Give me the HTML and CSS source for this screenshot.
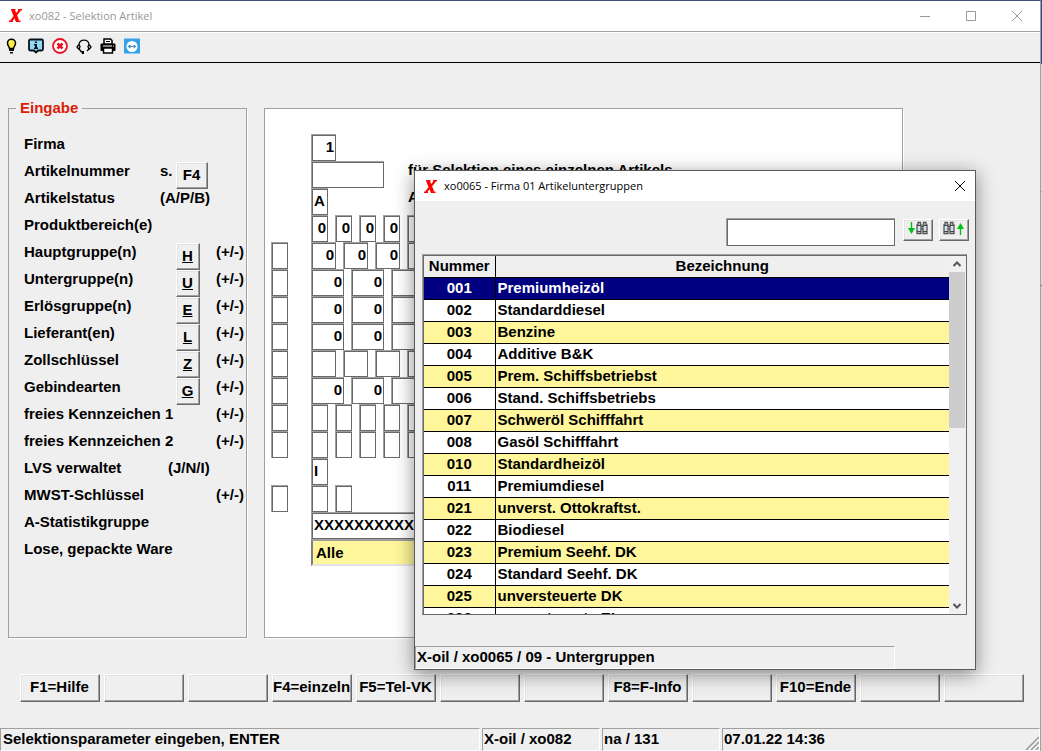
FILE: index.html
```html
<!DOCTYPE html>
<html lang="de">
<head>
<meta charset="utf-8">
<title>xo082 - Selektion Artikel</title>
<link rel="stylesheet" href="styles.css">
</head>
<body>
<div class="window">
  <header class="titlebar">
    <svg class="logo" viewBox="0 0 15 15" aria-hidden="true"><path d="M5 2 9.500 13" stroke="#f00" stroke-width="3.500"/><path d="M12 2 3 13" stroke="#f00" stroke-width="2"/><path d="M3 1.800H7.500M10 1.800H14M1 13.200H5M8 13.200H12.500" stroke="#f00" stroke-width="1.600"/></svg>
    <h1 class="title">xo082 - Selektion Artikel</h1>
    <div class="winbtns">
      <button class="winbtn" aria-label="Minimieren"><svg viewBox="0 0 12 12"><path d="M1 6.500H11" /></svg></button>
      <button class="winbtn" aria-label="Maximieren"><svg viewBox="0 0 12 12"><path d="M1.500 1.500H10.500V10.500H1.500Z"/></svg></button>
      <button class="winbtn" aria-label="Schließen"><svg viewBox="0 0 12 12"><path d="M1 1 11 11M11 1 1 11"/></svg></button>
    </div>
  </header>

  <nav class="toolbar">
    <button class="tool" aria-label="Tipp"><svg viewBox="0 0 16 16"><path d="M5.500 10.500C5.500 8.500 3.500 8 3.500 5.200A4 4 0 0 1 11.500 5.200C11.500 8 9.500 8.500 9.500 10.500Z" fill="#ffee3c" stroke="#000" stroke-width="1.500"/><path d="M5.500 4 6.500 3" stroke="#fff" stroke-width="1.500"/><path d="M5 11H10V13H5ZM6 14H9V15.500H6Z" fill="#111"/></svg></button>
    <button class="tool" aria-label="Information"><svg viewBox="0 0 16 16"><path d="M2.500 1.500H13.500Q15 1.500 15 3V11Q15 12.500 13.500 12.500H10L8 14.500 6 12.500H2.500Q1 12.500 1 11V3Q1 1.500 2.500 1.500Z" fill="#93d7f0" stroke="#06131c" stroke-width="1.800"/><path d="M7 3.500H9V5H7ZM6 6H9V9.500H10V11H6V9.500H7V7.500H6Z" fill="#06131c"/></svg></button>
    <button class="tool" aria-label="Abbrechen"><svg viewBox="0 0 16 16"><circle cx="8" cy="8" r="7" fill="#fff" stroke="#e81123" stroke-width="1.800"/><path d="M5.500 5.500 10.500 10.500M10.500 5.500 5.500 10.500" stroke="#e81123" stroke-width="2.500"/></svg></button>
    <button class="tool" aria-label="Support"><svg viewBox="0 0 16 16"><path d="M3 7C3 0.500 13 0.500 13 7M3 6.500 1 9 3 11.500M13 6.500 15 9 13 11.500M3 6.500 4 8.500 3 11.500M13 6.500 12 8.500 13 11.500M12.500 11.500 11 13M3.500 11.500 5.500 14" fill="none" stroke="#000" stroke-width="1.300"/><path d="M5 13H8V16H6Z" fill="#000"/></svg></button>
    <button class="tool" aria-label="Drucken"><svg viewBox="0 0 16 16"><path d="M1.500 6.500H14.500V12H1.500Z" fill="#000" stroke="#000" stroke-width="2" stroke-linejoin="round"/><path d="M4 6V1H10.500L12 2.500V6Z" fill="#fff" stroke="#000" stroke-width="1.500"/><path d="M6 3.500H10" stroke="#000"/><path d="M3.500 10H12.500V15H3.500Z" fill="#fff" stroke="#000" stroke-width="1.500"/><path d="M3 8H12M13 8H14" stroke="#fff"/></svg></button>
    <button class="tool" aria-label="Fernwartung"><svg viewBox="0 0 16 16"><path d="M0 0.500H16V15.500H0Z" fill="#35a1e6"/><circle cx="8" cy="8.500" r="5.500" fill="#fff"/><path d="M3.500 8.500 6.500 6.500V10.500ZM12.500 8.500 9.500 6.500V10.500ZM6 8H10V9H6Z" fill="#3786bd"/></svg></button>
  </nav>

  <main class="content">
    <fieldset class="criteria">
      <legend>Eingabe</legend>
      <div class="crit"><label for="firma">Firma</label></div>
      <div class="crit"><label for="artnr">Artikelnummer</label><span class="hint">s.</span><button class="btn lookup wide">F4</button></div>
      <div class="crit"><label for="status">Artikelstatus</label><span class="hint">(A/P/B)</span></div>
      <div class="crit"><label for="bereich">Produktbereich(e)</label></div>
      <div class="crit"><label for="haupt">Hauptgruppe(n)</label><button class="btn lookup"><u>H</u></button><label class="sign" for="s1">(+/-)</label></div>
      <div class="crit"><label for="unter">Untergruppe(n)</label><button class="btn lookup"><u>U</u></button><label class="sign" for="s2">(+/-)</label></div>
      <div class="crit"><label for="erloes">Erlösgruppe(n)</label><button class="btn lookup"><u>E</u></button><label class="sign" for="s3">(+/-)</label></div>
      <div class="crit"><label for="lief">Lieferant(en)</label><button class="btn lookup"><u>L</u></button><label class="sign" for="s4">(+/-)</label></div>
      <div class="crit"><label for="zoll">Zollschlüssel</label><button class="btn lookup"><u>Z</u></button><label class="sign" for="s5">(+/-)</label></div>
      <div class="crit"><label for="gebinde">Gebindearten</label><button class="btn lookup"><u>G</u></button><label class="sign" for="s6">(+/-)</label></div>
      <div class="crit"><label for="kz1">freies Kennzeichen 1</label><label class="sign" for="s7">(+/-)</label></div>
      <div class="crit"><label for="kz2">freies Kennzeichen 2</label><label class="sign" for="s8">(+/-)</label></div>
      <div class="crit"><label for="lvs">LVS verwaltet</label><span class="hint inset">(J/N/I)</span></div>
      <div class="crit"><label for="mwst">MWST-Schlüssel</label><label class="sign" for="s9">(+/-)</label></div>
      <div class="crit"><label for="statgr">A-Statistikgruppe</label></div>
      <div class="crit"><label for="ware">Lose, gepackte Ware</label></div>
    </fieldset>

    <section class="entry">
      <div class="line"><input class="field m first" id="firma" value="1"></div>
      <div class="line"><input class="field xl first" id="artnr"><span class="note">für Selektion eines einzelnen Artikels</span></div>
      <div class="line"><input class="field s first left" id="status" value="A"><span class="note far">A</span></div>
      <div class="line"><input class="field s first" id="bereich" value="0"><input class="field s" value="0" aria-label="Produktbereich 2"><input class="field s" value="0" aria-label="Produktbereich 3"><input class="field s" value="0" aria-label="Produktbereich 4"><input class="field s" value="0" aria-label="Produktbereich 5"></div>
      <div class="line"><input class="field s" id="s1"><input class="field m start" id="haupt" value="0"><input class="field m" value="0" aria-label="Hauptgruppe 2"><input class="field m" value="0" aria-label="Hauptgruppe 3"><input class="field m" value="0" aria-label="Hauptgruppe 4"></div>
      <div class="line"><input class="field s" id="s2"><input class="field l start" id="unter" value="0"><input class="field l" value="0" aria-label="Untergruppe 2"><input class="field l" value="0" aria-label="Untergruppe 3"></div>
      <div class="line"><input class="field s" id="s3"><input class="field l start" id="erloes" value="0"><input class="field l" value="0" aria-label="Erlösgruppe 2"><input class="field l" value="0" aria-label="Erlösgruppe 3"></div>
      <div class="line"><input class="field s" id="s4"><input class="field l start" id="lief" value="0"><input class="field l" value="0" aria-label="Lieferant 2"><input class="field l" value="0" aria-label="Lieferant 3"></div>
      <div class="line"><input class="field s" id="s5"><input class="field m start" id="zoll"><input class="field m" aria-label="Zollschlüssel 2"><input class="field m" aria-label="Zollschlüssel 3"><input class="field m" aria-label="Zollschlüssel 4"></div>
      <div class="line"><input class="field s" id="s6"><input class="field l start" id="gebinde" value="0"><input class="field l" value="0" aria-label="Gebindeart 2"><input class="field l" value="0" aria-label="Gebindeart 3"></div>
      <div class="line"><input class="field s" id="s7"><input class="field s start" id="kz1"><input class="field s" aria-label="Kennzeichen 1, 2"><input class="field s" aria-label="Kennzeichen 1, 3"><input class="field s" aria-label="Kennzeichen 1, 4"><input class="field s" aria-label="Kennzeichen 1, 5"></div>
      <div class="line"><input class="field s" id="s8"><input class="field s start" id="kz2"><input class="field s" aria-label="Kennzeichen 2, 2"><input class="field s" aria-label="Kennzeichen 2, 3"><input class="field s" aria-label="Kennzeichen 2, 4"><input class="field s" aria-label="Kennzeichen 2, 5"></div>
      <div class="line"><input class="field s first left" id="lvs" value="I"></div>
      <div class="line"><input class="field s" id="s9"><input class="field s start" id="mwst"><input class="field s" aria-label="MWST-Schlüssel 2"></div>
      <div class="line"><input class="field xxl first left" id="statgr" value="XXXXXXXXXX"></div>
      <div class="line"><select class="combo first" id="ware"><option>Alle</option></select></div>
    </section>
  </main>

  <div class="fkeys">
    <button class="btn">F1=Hilfe</button>
    <button class="btn" aria-label="F2"></button>
    <button class="btn" aria-label="F3"></button>
    <button class="btn">F4=einzeln</button>
    <button class="btn">F5=Tel-VK</button>
    <button class="btn" aria-label="F6"></button>
    <button class="btn" aria-label="F7"></button>
    <button class="btn">F8=F-Info</button>
    <button class="btn" aria-label="F9"></button>
    <button class="btn">F10=Ende</button>
    <button class="btn" aria-label="F11"></button>
    <button class="btn" aria-label="F12"></button>
  </div>

  <footer class="status">
    <span class="part message">Selektionsparameter eingeben, ENTER</span>
    <span class="part">X-oil / xo082</span>
    <span class="part">na / 131</span>
    <span class="part clock">07.01.22 14:36<svg class="grip" viewBox="0 0 14 14" aria-hidden="true"><path d="M1 14 14 1M6 14 14 6M11 14 14 11" stroke="#999" stroke-width="1.500"/></svg></span>
  </footer>

  <div class="dialog" role="dialog" aria-labelledby="dlg-title">
    <div class="dlg-title">
      <svg class="logo" viewBox="0 0 15 15" aria-hidden="true"><path d="M5 2 9.500 13" stroke="#f00" stroke-width="3.500"/><path d="M12 2 3 13" stroke="#f00" stroke-width="2"/><path d="M3 1.800H7.500M10 1.800H14M1 13.200H5M8 13.200H12.500" stroke="#f00" stroke-width="1.600"/></svg>
      <h2 class="title" id="dlg-title">xo0065 - Firma 01 Artikeluntergruppen</h2>
      <button class="winbtn dark" aria-label="Schließen"><svg viewBox="0 0 12 12"><path d="M1 1 11 11M11 1 1 11"/></svg></button>
    </div>
    <div class="search">
      <input class="field query" aria-label="Suchbegriff">
      <button class="btn find" aria-label="Abwärts suchen"><svg viewBox="0 0 22 16"><path d="M4.500 1V9" stroke="#00c010" stroke-width="1.400"/><path d="M1 7H8L4.500 13Z" fill="#00c010"/><g transform="translate(9 0)"><path d="M2 1.500H4.500V4H5V12.500H1V4H2ZM7.500 1.500H10V4H11V12.500H7V4H7.500Z" fill="#cfe0ee" stroke="#555" stroke-width="1.300"/><path d="M1 4.500H5M7 4.500H11M5 5.500H7M5 8H7M1 10.500H5M7 10.500H11" stroke="#444"/></g></svg></button>
      <button class="btn find" aria-label="Aufwärts suchen"><svg viewBox="0 0 22 16"><path d="M17.500 14V6" stroke="#00c010" stroke-width="1.400"/><path d="M14 8H21L17.500 2Z" fill="#00c010"/><g><path d="M2 1.500H4.500V4H5V12.500H1V4H2ZM7.500 1.500H10V4H11V12.500H7V4H7.500Z" fill="#cfe0ee" stroke="#555" stroke-width="1.300"/><path d="M1 4.500H5M7 4.500H11M5 5.500H7M5 8H7M1 10.500H5M7 10.500H11" stroke="#444"/></g></svg></button>
    </div>
    <div class="list">
      <div class="rows">
        <table>
          <thead><tr><th class="num">Nummer</th><th>Bezeichnung</th></tr></thead>
          <tbody>
            <tr class="selected"><td>001</td><td>Premiumheizöl</td></tr>
            <tr><td>002</td><td>Standarddiesel</td></tr>
            <tr><td>003</td><td>Benzine</td></tr>
            <tr><td>004</td><td>Additive B&amp;K</td></tr>
            <tr><td>005</td><td>Prem. Schiffsbetriebst</td></tr>
            <tr><td>006</td><td>Stand. Schiffsbetriebs</td></tr>
            <tr><td>007</td><td>Schweröl Schifffahrt</td></tr>
            <tr><td>008</td><td>Gasöl Schifffahrt</td></tr>
            <tr><td>010</td><td>Standardheizöl</td></tr>
            <tr><td>011</td><td>Premiumdiesel</td></tr>
            <tr><td>021</td><td>unverst. Ottokraftst.</td></tr>
            <tr><td>022</td><td>Biodiesel</td></tr>
            <tr><td>023</td><td>Premium Seehf. DK</td></tr>
            <tr><td>024</td><td>Standard Seehf. DK</td></tr>
            <tr><td>025</td><td>unversteuerte DK</td></tr>
            <tr><td>026</td><td>unversteuerte EL</td></tr>
          </tbody>
        </table>
      </div>
      <div class="scroll" aria-hidden="true">
        <svg viewBox="0 0 16 16"><path d="M4.500 10 8 6.500 11.500 10"/></svg>
        <div class="track"><div class="thumb"></div></div>
        <svg viewBox="0 0 16 16"><path d="M4.500 6 8 9.500 11.500 6"/></svg>
      </div>
    </div>
    <div class="dlg-status"><span class="part">X-oil / xo0065 / 09 - Untergruppen</span></div>
  </div>
</div>
</body>
</html>
```
FILE: styles.css
```css
* { box-sizing: border-box; }

body {
  margin: 0;
  padding: 0 1px 0 0;
  font: bold 15px/18px "Liberation Sans", Arial, sans-serif;
  color: #000;
  background: linear-gradient(#2f4e8c 0 64px, #d9d9d9 64px 191px, #a8a8a8 191px 192px, #dcdcdc 192px 285px, #666 285px 286px, #d5d5d5 286px);
}

button, input, select { font: inherit; color: inherit; }

.window {
  position: relative;
  display: flex;
  flex-direction: column;
  min-height: 100vh;
  background: #efefef;
  border-top: 1px solid #3b5278;
  border-right: 1px solid #a0a0a0;
  overflow: hidden;
}

/* title bars */
.titlebar, .dlg-title {
  display: flex;
  align-items: center;
  height: 31px;
  padding-left: 8px;
  background: #fff;
}
.titlebar { padding-bottom: 1px; border-bottom: 1px solid #a0a0a0; color: #999; }
.logo { width: 15px; height: 15px; flex: none; }
.title {
  flex: 1;
  margin: 0 0 0 6px;
  font: 11px/16px "Open Sans", "Noto Sans", sans-serif;
  white-space: nowrap;
}
.winbtns { display: flex; }
.winbtn {
  width: 46px;
  padding: 0;
  border: 0;
  background: none;
  display: flex;
  justify-content: center;
}
.winbtn svg { width: 12px; height: 12px; fill: none; stroke: #999; }
.winbtn.dark { width: 31px; }
.winbtn.dark svg { stroke: #000; }

.toolbar {
  display: flex;
  align-items: center;
  gap: 8px;
  height: 31px;
  padding-left: 4px;
  padding-bottom: 3px;
  border-top: 1px solid #fff;
  border-bottom: 1px solid #000;
}
.tool { padding: 0; border: 0; background: none; width: 16px; height: 16px; }
.tool svg { display: block; width: 16px; height: 16px; }

/* main form */
.content {
  flex: 1;
  display: flex;
  gap: 17px;
  padding: 36px 137px 36px 8px;
}
.criteria {
  flex: none;
  width: 239px;
  margin: 0;
  padding: 18px 0 0 15px;
  border: 1px solid #a0a0a0;
  box-shadow: 1px 1px 0 #fff;
}
.criteria legend {
  margin-left: -8px;
  padding: 0 4px;
  color: #d91d0a;
}
.crit {
  display: grid;
  grid-template-columns: 136px 16px 40px auto;
  grid-template-rows: 27px;
  align-items: start;
  white-space: nowrap;
}
.crit label { grid-column: 1; grid-row: 1; }
.crit .hint { grid-column: 2; grid-row: 1; }
.crit .hint.inset { padding-left: 8px; }
.crit .lookup { grid-column: 3; grid-row: 1; }
.crit .sign { grid-column: 4; }

.btn {
  padding: 0 1px 2px 0;
  background: #efefef;
  border: 1px solid;
  border-color: #fff #696969 #696969 #fff;
  box-shadow: inset -1px -1px 0 #a0a0a0, inset 1px 1px 0 #e3e3e3;
  white-space: nowrap;
  overflow: hidden;
}
.lookup { width: 24px; height: 27px; }
.lookup.wide { width: 32px; }

.entry {
  flex: 1;
  margin-top: 9px;
  padding: 25px 0 0 6px;
  background: #fff;
  border: 1px solid #a0a0a0;
  box-shadow: 1px 1px 0 #fff;
}
.line { display: flex; gap: 7px; height: 27px; }
.field {
  height: 27px;
  padding: 0 2px 4px;
  text-align: right;
  background: #fff;
  border: 0 solid #a0a0a0;
  border-width: 1px 0 0 1px;
  border-radius: 0;
  box-shadow: inset 0 0 0 1px #696969;
}
.field.left { text-align: left; }
.s { width: 17px; }
.m { width: 25px; }
.l { width: 33px; }
.xl { width: 73px; }
.xxl { width: 200px; }
.first { margin-left: 40px; }
.start { margin-left: 16px; }
.note { margin-left: 17px; white-space: nowrap; }
.note.far { margin-left: 73px; }
.combo {
  appearance: none;
  width: 200px;
  height: 27px;
  padding: 0 3px;
  background: #fff69b;
  border: 2px solid;
  border-color: #a0a0a0 #e3e3e3 #e3e3e3 #808080;
  border-radius: 0;
}

.fkeys {
  display: grid;
  grid-template-columns: repeat(12, 1fr);
  gap: 4px;
  padding: 0 16px 26px 20px;
}
.fkeys .btn { height: 28px; min-width: 0; }

/* status bars */
.status { display: flex; gap: 2px; }
.part {
  flex: none;
  width: 118px;
  height: 23px;
  padding: 1px 0 0 1px;
  border: 1px solid;
  border-color: #a0a0a0 #fff #fff #a0a0a0;
  white-space: nowrap;
}
.message { flex: 1; padding-left: 2px; }
.clock { display: flex; justify-content: space-between; width: 318px; }
.grip { width: 14px; height: 14px; align-self: flex-end; }

/* lookup dialog floating over the form */
.dialog {
  position: absolute;
  left: 414px;
  top: 169px;
  width: 562px;
  display: flex;
  flex-direction: column;
  background: #efefef;
  border: 1px solid #5a5a5a;
  box-shadow: 0 4px 18px rgba(0, 0, 0, .45);
}
.dlg-title { height: 30px; }
.search {
  display: flex;
  gap: 6px;
  padding: 17px 6px 8px;
  justify-content: flex-end;
}
.query { width: 169px; height: 28px; margin-right: 2px; text-align: left; }
.find { width: 30px; height: 22px; margin-top: 1px; }
.find svg { display: block; width: 22px; height: 16px; margin: 0 auto; }

.list {
  display: flex;
  height: 361px;
  margin: 0 8px 31px 7px;
  border: 1px solid;
  border-color: #a0a0a0 #696969 #696969 #a0a0a0;
  box-shadow: inset 1px 1px 0 #696969;
  padding: 1px 1px 0;
}
.rows { flex: 1; overflow: hidden; }
table { width: 100%; border-collapse: collapse; table-layout: fixed; background: #fff; }
th, td {
  height: 22px;
  padding: 0 0 0 2px;
  border-bottom: 1px solid #000;
  text-align: left;
  line-height: 18px;
  white-space: nowrap;
}
th { height: 21px; background: #efefef; text-align: center; padding: 0; }
.num { width: 71px; }
td:first-child { text-align: center; padding-left: 0; }
th:first-child, td:first-child { border-right: 1px solid #000; }
tbody tr:nth-child(odd) { background: #fff69b; }
tbody tr.selected { background: #000080; color: #fff; }

.scroll { width: 16px; display: flex; flex-direction: column; background: #f0f0f0; }
.scroll svg { width: 16px; height: 16px; fill: none; stroke: #555; stroke-width: 2; }
.track { flex: 1; }
.thumb { height: 48%; background: #cdcdcd; }

.dlg-status .part { display: block; width: 480px; }
```
